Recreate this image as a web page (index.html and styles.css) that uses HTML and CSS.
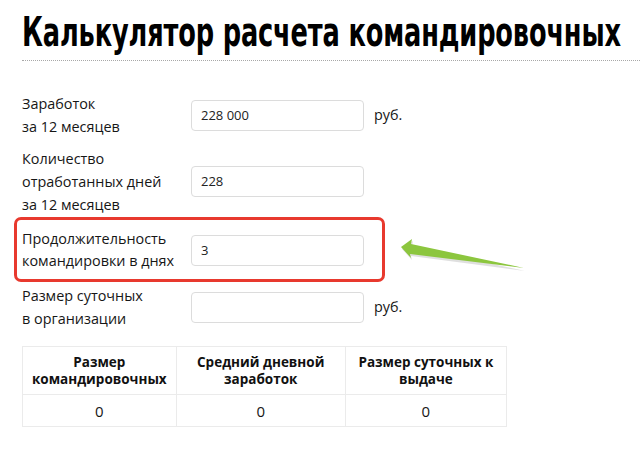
FILE: index.html
```html
<!DOCTYPE html>
<html lang="ru">
<head>
<meta charset="utf-8">
<title>Калькулятор расчета командировочных</title>
<link rel="stylesheet" href="styles.css">
</head>
<body>
<div class="page">
  <div class="head">
    <h1 class="title"><span class="title-text">Калькулятор расчета командировочных</span></h1>
  </div>
  <div class="form">
    <div class="row row-1">
      <div class="label">Заработок<br>за 12 месяцев</div>
      <div class="field">228 000</div>
      <div class="unit">руб.</div>
    </div>
    <div class="row row-2">
      <div class="label">Количество<br>отработанных дней<br>за 12 месяцев</div>
      <div class="field">228</div>
      <div class="unit"></div>
    </div>
    <div class="row row-hl">
      <div class="label">Продолжительность<br>командировки в днях</div>
      <div class="field">3</div>
    </div>
    <div class="row row-4">
      <div class="label">Размер суточных<br>в организации</div>
      <div class="field"></div>
      <div class="unit">руб.</div>
    </div>
  </div>
  <table class="result">
    <thead>
      <tr>
        <th class="c1">Размер<br>командировочных</th>
        <th class="c2">Средний дневной<br>заработок</th>
        <th class="c3">Размер суточных к<br>выдаче</th>
      </tr>
    </thead>
    <tbody>
      <tr><td>0</td><td>0</td><td>0</td></tr>
    </tbody>
  </table>
  <svg class="arrow" width="150" height="50" viewBox="0 0 150 50">
    <polygon class="arrow-shadow" points="12,19 23,11 22,16 135,41 21,26 22,30"/>
    <polygon class="arrow-body" points="11,17 22,9 21,14 134,38 20,24 21,28"/>
  </svg>
</div>
</body>
</html>
```

FILE: styles.css
```css
html, body {
  margin: 0;
  padding: 0;
  background: #fff;
}
body {
  font-family: "Open Sans", "Liberation Sans", sans-serif;
  color: #161616;
}
.page {
  position: relative;
  padding-left: 22px;
  width: 618px;
  height: 450px;
  overflow: hidden;
}
.head {
  border-bottom: 1px dotted #a8a8a8;
  padding-top: 9px;
  box-sizing: border-box;
  height: 61px;
  overflow: hidden;
}
.title {
  margin: 0;
  font-family: "DejaVu Sans Condensed", "DejaVu Sans", sans-serif;
  font-weight: bold;
  font-size: 41px;
  line-height: 46px;
  color: #000;
  white-space: nowrap;
  width: 600px;
}
.title-text {
  display: inline-block;
  transform: scaleX(0.695);
  transform-origin: 0 0;
  letter-spacing: -0.2px;
}
.form {
  padding-top: 31px;
  display: flex;
  flex-direction: column;
}
.row {
  display: flex;
  align-items: center;
  font-size: 14.4px;
  line-height: 23px;
}
.row-1 { margin-bottom: 9px; }
.row-2 { margin-bottom: 1px; }
.label {
  width: 169px;
  flex: none;
}
.field {
  width: 173px;
  height: 31px;
  box-sizing: border-box;
  border: 1px solid #dcdcdc;
  border-radius: 4px;
  padding-left: 9px;
  font-size: 13px;
  line-height: 29px;
  color: #222;
  flex: none;
}
.unit {
  margin-left: 10px;
  margin-top: -2px;
}
.row-hl {
  margin-left: -8px;
  width: 371px;
  box-sizing: border-box;
  border: 3px solid #e8392e;
  border-radius: 7px;
  padding: 8px 0 7px 5px;
  line-height: 22px;
}
.row-4 { margin-top: 2px; }
.result {
  margin-top: 16px;
  border-collapse: collapse;
  width: 485px;
  font-size: 13.5px;
}
.result th, .result td {
  border: 1px solid #ebebeb;
  text-align: center;
}
.result th {
  font-weight: bold;
  line-height: 17px;
  height: 47px;
  padding: 0;
  color: #111;
}
.result td {
  height: 31px;
  padding: 0;
  font-size: 15px;
}
.c1 { width: 153px; }
.c2 { width: 170px; }
.c3 { width: 162px; }
.arrow {
  position: absolute;
  left: 390px;
  top: 230px;
}
.arrow-body { fill: #8cc63e; }
.arrow-shadow { fill: #c9c9c9; opacity: 0.6; }
```
